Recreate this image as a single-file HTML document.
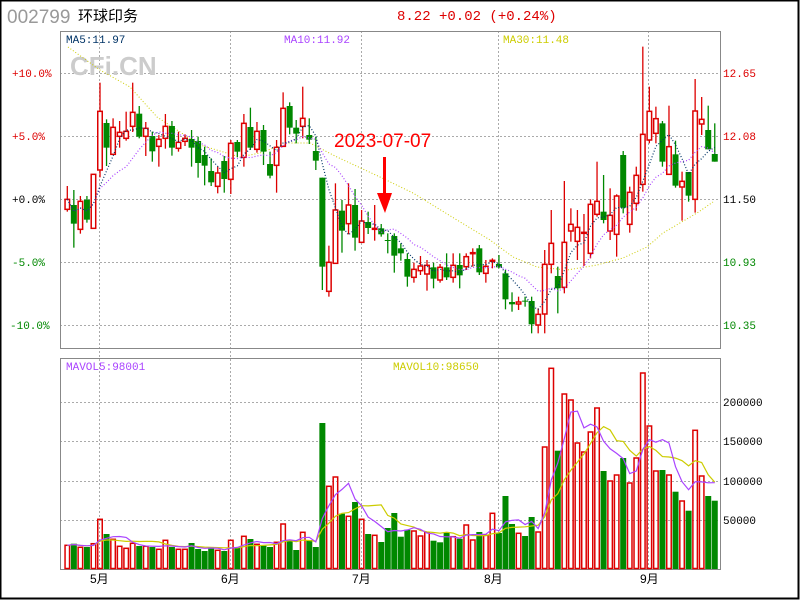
<!DOCTYPE html><html><head><meta charset="utf-8"><style>
body{margin:0;width:800px;height:600px;overflow:hidden;background:#fff}
#c{position:absolute;left:0;top:0}
</style></head><body>
<svg id="c" width="800" height="600" xmlns="http://www.w3.org/2000/svg" font-family="Liberation Mono, monospace">
<rect x="0.5" y="0.5" width="798" height="598" fill="#fff" stroke="#000" stroke-width="2"/>
<text x="7" y="23" font-family="Liberation Sans, sans-serif" font-size="19" fill="#999">002799</text>
<text x="78" y="21" font-family="Liberation Sans, 'Noto Sans CJK SC', sans-serif" font-size="15" fill="#000">环球印务</text>
<text x="397" y="20" font-size="14" fill="#d00">8.22 +0.02 (+0.24%)</text>
<g stroke="#aaa" stroke-dasharray="2,2" stroke-width="1">
<line x1="60" x2="720" y1="73.5" y2="73.5"/><line x1="60" x2="720" y1="136.5" y2="136.5"/><line x1="60" x2="720" y1="199.5" y2="199.5"/><line x1="60" x2="720" y1="262.5" y2="262.5"/><line x1="60" x2="720" y1="325.5" y2="325.5"/>
<line x1="60" x2="720" y1="402.5" y2="402.5"/><line x1="60" x2="720" y1="441.5" y2="441.5"/><line x1="60" x2="720" y1="481.5" y2="481.5"/><line x1="60" x2="720" y1="520.5" y2="520.5"/>
<line x1="99.5" x2="99.5" y1="31" y2="569"/><line x1="230.5" x2="230.5" y1="31" y2="569"/><line x1="361.5" x2="361.5" y1="31" y2="569"/><line x1="498.5" x2="498.5" y1="31" y2="569"/><line x1="648.5" x2="648.5" y1="31" y2="569"/>
</g>
<rect x="60.5" y="31.5" width="660" height="317" fill="none" stroke="#888"/>
<rect x="60.5" y="358.5" width="660" height="211" fill="none" stroke="#888"/>
<text x="70" y="75" font-family="Liberation Sans, sans-serif" font-weight="bold" font-size="26" fill="#ccc">CFi.CN</text>
<text x="66" y="43" font-size="11" fill="#036">MA5:11.97</text>
<text x="284" y="43" font-size="11" fill="#a4f">MA10:11.92</text>
<text x="503" y="43" font-size="11" fill="#cc0">MA30:11.48</text>
<text x="66" y="370" font-size="11" fill="#a4f">MAVOL5:98001</text>
<text x="393" y="370" font-size="11" fill="#cc0">MAVOL10:98650</text>
<g font-size="11">
<text x="12" y="77" fill="#d00">+10.0%</text><text x="12" y="140" fill="#d00">+5.0%</text><text x="12" y="203">+0.0%</text><text x="12" y="266" fill="#080">-5.0%</text><text x="10" y="329" fill="#080">-10.0%</text>
<text x="723" y="77" fill="#d00">12.65</text><text x="723" y="140" fill="#d00">12.08</text><text x="723" y="203">11.50</text><text x="723" y="266" fill="#080">10.93</text><text x="723" y="329" fill="#080">10.35</text>
<text x="723" y="406">200000</text><text x="723" y="445">150000</text><text x="723" y="485">100000</text><text x="723" y="524">50000</text>
</g>
<g font-family="Liberation Sans, 'Noto Sans CJK SC', sans-serif" font-size="12">
<text x="90" y="583">5月</text><text x="221" y="583">6月</text><text x="352" y="583">7月</text><text x="484" y="583">8月</text><text x="640" y="583">9月</text>
</g>
<polyline fill="none" stroke="#cc0" stroke-width="1" stroke-dasharray="1,2" points="68,47 100,70 130,87 157,117 200,145 240,157 260,153 287,143 310,143 337,157 380,177 413,193 457,220 490,240 513,257 537,267 567,270 597,265 623,258 647,247 663,233 697,213 713,202"/>
<g id="k"></g>
<text x="334" y="147" font-family="Liberation Sans, sans-serif" font-size="19" fill="#f00" font-weight="300">2023-07-07</text>
<rect x="383" y="157" width="3" height="38" fill="#f00"/>
<polygon points="377,193 392,193 385,213" fill="#f00"/>
</svg>
<script>
var K4=[[388,418,348,425,1],[405,461,360,533,0],[394,478,378,491,1],[389,449,378,458,0],[313,475,313,475,1],[124,300,38,322,1],[159,233,148,288,0],[172,253,145,253,1],[187,199,153,233,1],[184,205,125,212,1],[127,169,38,186,1],[131,200,108,205,0],[175,199,156,258,1],[198,244,185,275,0],[208,229,195,290,1],[169,205,132,236,1],[168,233,153,257,0],[217,235,185,245,1],[205,214,193,228,1],[207,233,180,290,0],[213,279,200,323,0],[255,287,230,346,0],[303,337,265,348,0],[309,349,290,370,1],[273,327,258,368,0],[220,328,210,372,1],[216,245,210,262,0],[160,262,132,290,1],[171,233,113,240,0],[184,238,156,248,1],[180,245,165,285,0],[282,317,245,325,0],[232,286,210,368,1],[115,229,67,229,1],[108,173,97,193,0],[173,191,150,220,0],[145,169,50,205,1],[195,209,145,222,0],[243,272,200,300,0],[323,590,323,660,0],[577,664,527,680,1],[420,580,340,580,1],[422,482,390,548,0],[405,461,340,493,1],[405,503,357,542,0],[453,517,420,517,1],[456,474,425,492,0],[475,477,405,512,1],[475,493,462,500,0]];
var K5=[[600,602,580,640,0],[588,647,580,698,0],[625,640,610,662,0],[657,710,640,740,0],[688,712,668,728,1],[678,692,648,705,1],[676,702,660,752,1],[682,716,668,745,0],[682,720,672,728,1],[682,712,640,720,0],[676,712,640,728,1],[675,706,640,745,0],[650,680,640,690,1],[638,640,625,680,1],[625,697,615,705,0],[679,700,660,728,1],[661,663,655,685,1],[672,682,645,685,0],[700,778,690,808,0],[786,793,757,815,0],[786,792,770,810,1],[782,784,770,800,0],[783,853,770,880,0],[823,855,805,880,1],[673,822,630,880,1],[610,673,510,700,1],[708,745,680,820,0],[607,742,423,760,1],[553,573,505,605,1],[562,604,510,660,1],[577,579,522,678,1],[493,640,478,655,1],[484,523,365,530,1],[515,540,405,550,0],[526,573,445,600,1],[468,583,463,650,1],[345,503,333,520,0],[457,553,440,578,1],[406,490,380,512,1],[283,433,20,455,1],[214,300,140,310,1],[236,280,200,310,1],[250,365,243,380,0],[320,403,197,403,1],[343,437,302,443,0],[424,441,395,542,1],[396,467,396,485,0],[213,478,117,518,1],[238,252,171,285,1],[270,328,197,328,0],[342,365,250,365,0]];
var C=[];K4.forEach(function(a){C.push([70+a[0]/3,70+a[1]/3,70+a[2]/3,70+a[3]/3,a[4]])});
K5.forEach(function(a){C.push([40+a[0]/3,40+a[1]/3,40+a[2]/3,40+a[3]/3,a[4]])});
var V=[[545.3,1],[543.7,0],[547.3,1],[547,0],[543.7,1],[519.3,1],[534,0],[539.3,1],[546.3,1],[548.3,1],[543.3,1],[546,0],[546.3,1],[547,0],[549.3,1],[540.3,1],[547,0],[549.3,1],[549.3,1],[543,0],[549,0],[551,0],[547.7,0],[550.3,1],[551,0],[540.3,1],[547.7,0],[536.3,1],[539,0],[544.3,1],[545.7,0],[547,0],[542.3,1],[524,1],[540,0],[550,0],[532.3,1],[540,0],[547,0],[423,0],[486.3,1],[477,1],[513.7,0],[516.3,1],[502,0],[519.3,1],[534,0],[535.3,1],[542,0],[528,0],[513,0],[536.7,0],[529.7,0],[531,1],[536,1],[532.3,1],[540.7,0],[542.3,0],[532.7,0],[536.7,1],[538.7,0],[525,1],[540,1],[532,0],[535.3,1],[513.3,1],[533,0],[496,0],[524,0],[533.3,1],[536,0],[517,0],[532,1],[447,1],[368.3,1],[450.7,0],[394,1],[400,1],[443,1],[452,1],[432,1],[408,1],[471,0],[481,1],[475,1],[458,0],[483,1],[458,1],[373,1],[426,1],[471,1],[470,0],[475,1],[491.7,0],[501,1],[510.7,0],[430.3,1],[476,1],[496,0],[500.7,0]];
var s='',ns='http://www.w3.org/2000/svg';
function X(i){return 64.3+6.54*i}
for(var i=0;i<V.length;i++){var x=X(i),v=V[i];
 if(v[1])s+='<rect x="'+(x+.75)+'" y="'+v[0]+'" width="4.5" height="'+(568.5-v[0])+'" fill="none" stroke="#d00" stroke-width="1.5"/>';
 else s+='<rect x="'+x+'" y="'+v[0]+'" width="6" height="'+(569-v[0])+'" fill="#080"/>';}
var cl=[];
for(var i=0;i<C.length;i++){var x=X(i),c=C[i],col=c[4]?'#d00':'#080',cx=x+3;
 s+='<line x1="'+cx+'" x2="'+cx+'" y1="'+c[2]+'" y2="'+c[3]+'" stroke="'+col+'" stroke-width="1.3"/>';
 var h=Math.max(c[1]-c[0],1);
 if(c[4])s+='<rect x="'+(x+.75)+'" y="'+c[0]+'" width="4.5" height="'+h+'" fill="#fff" stroke="#d00" stroke-width="1.5"/>';
 else s+='<rect x="'+x+'" y="'+c[0]+'" width="6" height="'+h+'" fill="#080"/>';
 cl.push(c[4]?c[0]:c[1]);}
function ma(arr,n,f){var p=[];for(var i=0;i<arr.length;i++){var a=0,k=0;for(var j=Math.max(0,i-n+1);j<=i;j++){a+=f(arr[j]);k++}p.push(X(i)+3+','+(a/k).toFixed(1))}return p.join(' ')}
s+='<polyline fill="none" stroke="#a4f" stroke-width="1.2" stroke-dasharray="1,2" points="'+ma(cl,10,function(a){return a})+'"/>';
s+='<polyline fill="none" stroke="#036" stroke-width="1.2" stroke-dasharray="1,2" points="'+ma(cl,5,function(a){return a})+'"/>';
s+='<polyline fill="none" stroke="#cc0" stroke-width="1.2" points="'+ma(V,10,function(a){return a[0]})+'"/>';
s+='<polyline fill="none" stroke="#a4f" stroke-width="1.2" points="'+ma(V,5,function(a){return a[0]})+'"/>';
document.getElementById('k').innerHTML=s;
</script>
</body></html>
